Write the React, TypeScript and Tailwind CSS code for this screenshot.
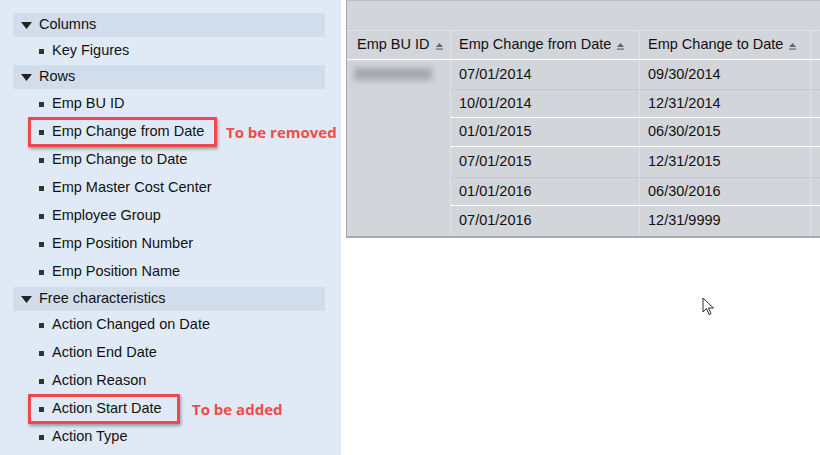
import React from 'react';

const rowsItems = [
  'Emp BU ID',
  'Emp Change from Date',
  'Emp Change to Date',
  'Emp Master Cost Center',
  'Employee Group',
  'Emp Position Number',
  'Emp Position Name',
];

const freeItems = [
  'Action Changed on Date',
  'Action End Date',
  'Action Reason',
  'Action Start Date',
  'Action Type',
];

const dates = [
  ['07/01/2014', '09/30/2014', 'h-[30px] border-[#c3c8d2]'],
  ['10/01/2014', '12/31/2014', 'h-[28px] border-white'],
  ['01/01/2015', '06/30/2015', 'h-[29px] border-white'],
  ['07/01/2015', '12/31/2015', 'h-[31px] border-[#c3c8d2]'],
  ['01/01/2016', '06/30/2016', 'h-[28px] border-white'],
  ['07/01/2016', '12/31/9999', 'h-[30px] border-transparent'],
];

function SectionHeader({ label }: { label: string }) {
  return (
    <div className="flex items-center h-6 mx-[13px] w-[312px] bg-[#d1ddeb] pl-2">
      <svg width="11" height="7" viewBox="0 0 11 7" className="mr-[7px]">
        <path d="M0 0 L11 0 L5.5 7 Z" fill="#222" />
      </svg>
      <span>{label}</span>
    </div>
  );
}

function Item({ label, mark, note }: { label: string; mark?: 'removed' | 'added'; note?: string }) {
  return (
    <div className="relative flex items-center h-7 pl-[39px]">
      <span className="w-[5px] h-[5px] bg-[#333] mr-[8px]" />
      <span>{label}</span>
      {mark && (
        <>
          <div
            className={
              'absolute top-[-1px] bottom-[-1px] left-[28px] border-[3px] border-[#ee4a4d] shadow-[1px_2px_3px_rgba(0,0,0,0.35)] ' +
              (mark === 'removed' ? 'w-[189px]' : 'w-[152px]')
            }
          />
          <span
            className={
              'absolute font-bold text-[#f04b4b] text-[15px] ' +
              (mark === 'removed' ? 'left-[226px]' : 'left-[192px]')
            }
            style={{ fontFamily: '"Open Sans", sans-serif' }}
          >
            {note}
          </span>
        </>
      )}
    </div>
  );
}

function SortIcon() {
  return (
    <svg width="9" height="9" viewBox="0 0 9 9" className="ml-[5px] mt-[2px]">
      <path d="M4.5 1 L8 5 L1 5 Z" fill="#666" />
      <rect x="1" y="6.5" width="7" height="1.2" fill="#666" />
    </svg>
  );
}

export default function App() {
  return (
    <div
      className="flex w-[820px] h-[455px] overflow-hidden bg-white text-[14.5px] text-[#111]"
      style={{ fontFamily: '"Liberation Sans", Arial, sans-serif' }}
    >
      {/* field panel */}
      <div className="w-[341px] shrink-0 bg-[#e0eaf6] pt-[13px]">
        <SectionHeader label="Columns" />
        <Item label="Key Figures" />
        <SectionHeader label="Rows" />
        <div className="pt-[1px]">
          {rowsItems.map((r) => (
            <Item
              key={r}
              label={r}
              mark={r === 'Emp Change from Date' ? 'removed' : undefined}
              note="To be removed"
            />
          ))}
        </div>
        <div className="pt-[1px]">
          <SectionHeader label="Free characteristics" />
        </div>
        <div>
          {freeItems.map((r) => (
            <Item
              key={r}
              label={r}
              mark={r === 'Action Start Date' ? 'added' : undefined}
              note="To be added"
            />
          ))}
        </div>
      </div>

      {/* table area */}
      <div className="relative flex-1 pl-[5px]">
        <div className="w-[480px] bg-[#d2d5da] border-l border-[#a4a8ae] border-b-2 border-b-[#a9acb1]">
          <div className="h-[31px] border-t border-[#b9bcc1] border-b border-b-[#dfe2e6]" />
          <div className="flex h-[29px] items-center border-b border-white">
            <div className="w-[104px] h-full flex items-center pl-[10px] border-r border-[#dfe3ea]">
              Emp BU ID
              <SortIcon />
            </div>
            <div className="w-[189px] h-full flex items-center pl-[8px] border-r border-[#dfe3ea]">
              Emp Change from Date
              <SortIcon />
            </div>
            <div className="w-[171px] h-full flex items-center pl-[8px] border-r border-[#dfe3ea]">
              Emp Change to Date
              <SortIcon />
            </div>
            <div className="flex-1" />
          </div>
          <div className="flex">
            <div className="w-[104px] border-r border-[#dfe3ea] pt-[8px] pl-[7px]">
              <div className="w-[78px] h-[12px] bg-[#a3a6ab] blur-[3px]" />
            </div>
            <div className="flex-1">
              {dates.map(([a, b, line]) => (
                <div key={a} className={'flex border-b ' + line}>
                  <div className="w-[189px] flex items-center pl-[8px] border-r border-[#dfe3ea]">{a}</div>
                  <div className="w-[171px] flex items-center pl-[8px] border-r border-[#dfe3ea]">{b}</div>
                  <div className="flex-1" />
                </div>
              ))}
            </div>
          </div>
        </div>

        {/* mouse pointer */}
        <svg
          width="14"
          height="20"
          viewBox="0 0 14 20"
          className="absolute left-[361px] top-[297px]"
        >
          <path d="M1 1 L1 15 L4.5 11.5 L7 17.5 L9 16.6 L6.6 11 L11.5 11 Z" fill="#fff" stroke="#2a2a3a" strokeWidth="1" strokeLinejoin="round" />
        </svg>
      </div>
    </div>
  );
}
